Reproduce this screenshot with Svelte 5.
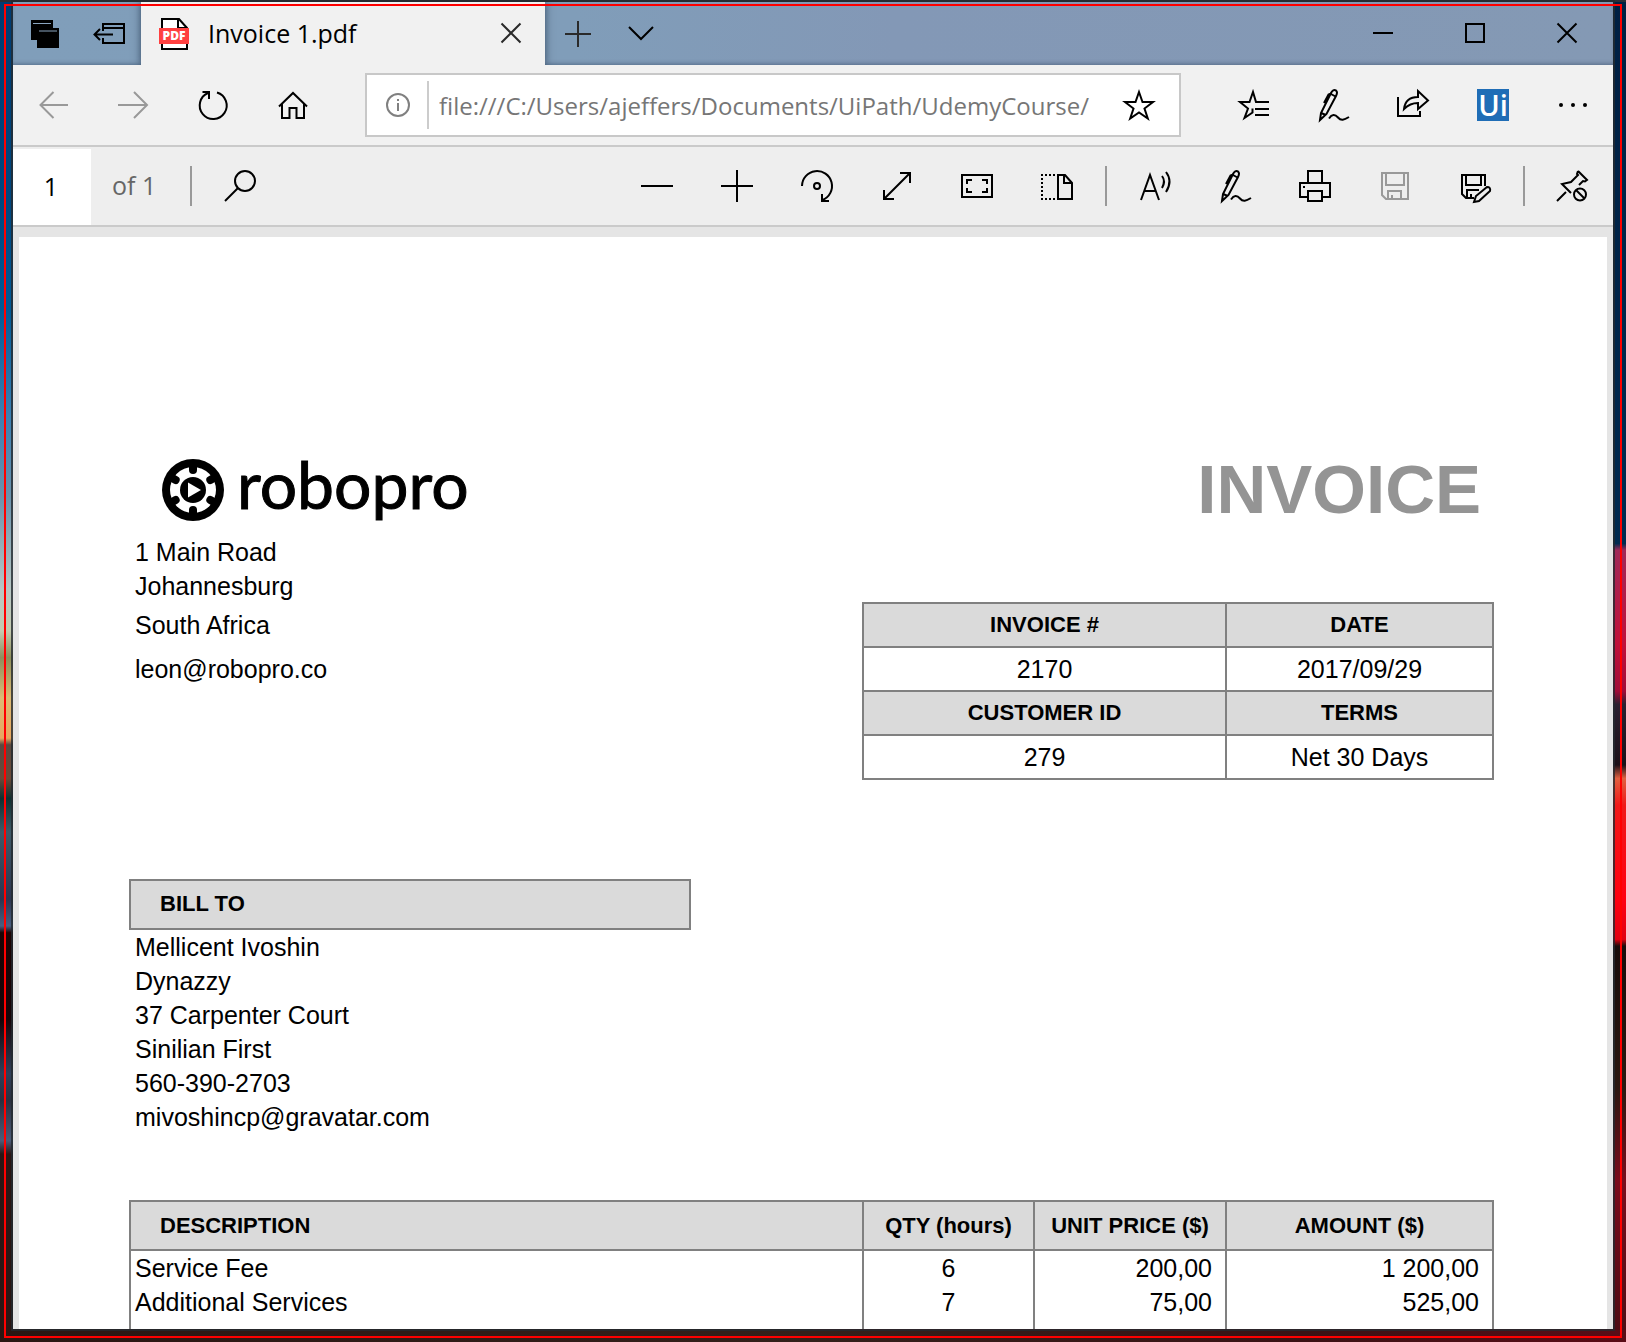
<script lang="ts">
  let address = $state('file:///C:/Users/ajeffers/Documents/UiPath/UdemyCourse/');
  let pageNumber = $state('1');

  const sender = ['1 Main Road', 'Johannesburg'];
  const senderContact = ['South Africa', 'leon@robopro.co'];
  const customer = [
    'Mellicent Ivoshin',
    'Dynazzy',
    '37 Carpenter Court',
    'Sinilian First',
    '560-390-2703',
    'mivoshincp@gravatar.com'
  ];
  const items = [
    { name: 'Service Fee', qty: '6', price: '200,00', amount: '1 200,00' },
    { name: 'Additional Services', qty: '7', price: '75,00', amount: '525,00' }
  ];
  const teeth = [0, 60, 120, 180, 240, 300];
</script>

{#snippet pen()}
  <svg class="icon" viewBox="0 0 32 32">
    <path d="M3 31 L4 24 L14 4 Q16 0 19 1.500 Q21 3 19 7 L9.500 25 Z M14 5 L18.500 7.500 M4 24 L9 26 M7 14 L11.500 5.500 L14 4.500" />
    <path d="M12 29.500 C15 25 18 25 21 28.500 C24 32 27 31 32 28" />
  </svg>
{/snippet}

<div class="desktop">
  <div class="window">
    <header class="titlebar">
      <button class="tool tab-tool" aria-label="Tabs set aside">
        <svg class="icon" viewBox="0 0 32 32">
          <path class="solid" d="M2 3h22v8h6v20H8v-8H2z" />
          <path class="pale" d="M4 6.500h18M10 14h18" />
        </svg>
      </button>
      <button class="tool tab-tool" aria-label="Set these tabs aside">
        <svg class="icon" viewBox="0 0 32 32">
          <path d="M10 14V7h21v19H10v-5M10 11h21M1.500 17.500H20M7 12L1.500 17.500L7 23" />
        </svg>
      </button>
      <div class="tab">
        <svg class="icon" viewBox="0 0 32 32">
          <path class="sheet" d="M4 1h17l8 9v21H4z" />
          <path d="M20 1v9h9" />
          <rect class="badge" x="1" y="10" width="30" height="16" />
          <text class="badge-text" x="16" y="22">PDF</text>
        </svg>
        <span class="tab-title">Invoice 1.pdf</span>
        <button class="tool tab-close" aria-label="Close tab">
          <svg class="icon dim" viewBox="0 0 32 32"><path d="M6.500 6.500l19 19M25.500 6.500l-19 19" /></svg>
        </button>
      </div>
      <button class="tool tab-tool" aria-label="New tab">
        <svg class="icon dim" viewBox="0 0 32 32"><path d="M4 17h26M17 4v26" /></svg>
      </button>
      <button class="tool tab-tool" aria-label="Show tab previews">
        <svg class="icon" viewBox="0 0 32 32"><path d="M4 10l12 12l12-12" /></svg>
      </button>
      <div class="spacer"></div>
      <button class="tool win-tool" aria-label="Minimize">
        <svg class="icon" viewBox="0 0 32 32"><path d="M6 16h20" /></svg>
      </button>
      <button class="tool win-tool" aria-label="Maximize">
        <svg class="icon" viewBox="0 0 32 32"><path d="M7 7h18v18H7z" /></svg>
      </button>
      <button class="tool win-tool" aria-label="Close window">
        <svg class="icon" viewBox="0 0 32 32"><path d="M6.500 6.500l19 19M25.500 6.500l-19 19" /></svg>
      </button>
    </header>

    <nav class="navbar">
      <button class="tool" aria-label="Back" disabled>
        <svg class="icon" viewBox="0 0 32 32"><path d="M31 16H4M16.500 3L3.500 16l13 13" /></svg>
      </button>
      <button class="tool" aria-label="Forward" disabled>
        <svg class="icon" viewBox="0 0 32 32"><path d="M1 16h28M17 3l13 13l-13 13" /></svg>
      </button>
      <button class="tool" aria-label="Refresh">
        <svg class="icon" viewBox="0 0 32 32"><path d="M20 3.500A13.500 13.500 0 1 1 11 4M5.500 3H12v7" /></svg>
      </button>
      <button class="tool" aria-label="Home">
        <svg class="icon" viewBox="0 0 32 32">
          <path d="M2 17.500L16 4l14 13.500M5 15v14h7.500V19h7v10H27V15" />
        </svg>
      </button>
      <div class="address">
        <button class="tool info" aria-label="Site information">
          <svg class="icon" viewBox="0 0 32 32">
            <circle cx="17" cy="16" r="11" /><path d="M17 14v8M17 10v2" />
          </svg>
        </button>
        <input class="url" type="text" aria-label="Address" bind:value={address} />
        <button class="tool favorite" aria-label="Add to favorites">
          <svg class="icon" viewBox="0 0 32 32">
            <path d="M16 3l3.500 10H30l-8.500 6.500l3.300 10L16 23.500l-8.800 6l3.300-10L2 13h10.500z" />
          </svg>
        </button>
      </div>
      <button class="tool" aria-label="Favorites and history">
        <svg class="icon" viewBox="0 0 32 32">
          <path d="M32 13H19L16 3L12.500 13H3l8 6.500L7.500 29l8-5.500v-4M18 20h14M18 26h14" />
        </svg>
      </button>
      <button class="tool" aria-label="Add notes">{@render pen()}</button>
      <button class="tool" aria-label="Share">
        <svg class="icon" viewBox="0 0 32 32">
          <path d="M1 8v19h22v-5" />
          <path d="M7 20c1-8 6-12 14-12V2l10 9.500L21 20v-6c-6 0-10 2-14 6z" />
        </svg>
      </button>
      <button class="tool" aria-label="UiPath extension"><span class="uipath">Ui</span></button>
      <button class="tool" aria-label="Settings and more">
        <svg class="icon" viewBox="0 0 32 32">
          <circle class="solid" cx="4" cy="16" r="2" /><circle class="solid" cx="16" cy="16" r="2" />
          <circle class="solid" cx="28" cy="16" r="2" />
        </svg>
      </button>
    </nav>

    <div class="pdfbar">
      <input class="page-number" type="text" aria-label="Page number" bind:value={pageNumber} />
      <span class="page-count">of 1</span>
      <span class="divider"></span>
      <button class="tool find" aria-label="Find">
        <svg class="icon" viewBox="0 0 32 32"><circle cx="21" cy="11" r="10" /><path d="M14 18L1 31" /></svg>
      </button>
      <div class="spacer"></div>
      <button class="tool" aria-label="Zoom out">
        <svg class="icon" viewBox="0 0 32 32"><path d="M0 16h32" /></svg>
      </button>
      <button class="tool" aria-label="Zoom in">
        <svg class="icon" viewBox="0 0 32 32"><path d="M0 16h32M16 0v32" /></svg>
      </button>
      <button class="tool" aria-label="Rotate">
        <svg class="icon" viewBox="0 0 32 32">
          <path d="M1 16A15 15 0 1 1 21.500 30M21 24v7h7" /><circle cx="16" cy="16" r="3" />
        </svg>
      </button>
      <button class="tool" aria-label="Full screen">
        <svg class="icon" viewBox="0 0 32 32"><path d="M3 29L29 3M19 3h10v10M3 20v9h10" /></svg>
      </button>
      <button class="tool" aria-label="Fit to page">
        <svg class="icon" viewBox="0 0 32 32">
          <path d="M1 5h30v22H1zM6 14v-4h5M21 10h5v4M26 18v4h-5M11 22H6v-4" />
        </svg>
      </button>
      <button class="tool" aria-label="Page layout">
        <svg class="icon" viewBox="0 0 32 32">
          <path class="dots" d="M14 5H1v24h15" />
          <path d="M17 5h7l7 8v16H17zM23 5v8h8" />
        </svg>
      </button>
      <span class="divider"></span>
      <button class="tool" aria-label="Read aloud">
        <svg class="icon" viewBox="0 0 32 32">
          <path d="M2 30L11 5l9 25M5 21h12M23 6q4 5 0 12M27 2q7 9 0 20" />
        </svg>
      </button>
      <button class="tool" aria-label="Draw">{@render pen()}</button>
      <button class="tool" aria-label="Print">
        <svg class="icon" viewBox="0 0 32 32">
          <path d="M9 13V1h14v12M9 27H1V13h30v14h-8M9 21h14v10H9z" />
          <rect class="solid" x="4" y="16" width="2" height="2" />
        </svg>
      </button>
      <button class="tool" aria-label="Save" disabled>
        <svg class="icon" viewBox="0 0 32 32">
          <path d="M3 3h26v26H7l-4-4zM7 3v12h18V3M9 29v-8h13v8M13 29v-4" />
        </svg>
      </button>
      <button class="tool" aria-label="Save as">
        <svg class="icon" viewBox="0 0 32 32">
          <path d="M15 28H7l-4-4V5h23v11M7 5v10h15V5M8 28v-8h12M12 28v-4" />
          <path d="M15 32l2-6L28 17q4 0 3 4L20 31z" />
        </svg>
      </button>
      <span class="divider"></span>
      <button class="tool" aria-label="Unpin toolbar">
        <svg class="icon" viewBox="0 0 32 32">
          <path d="M0 31l9-9M21 1l9 9l-2 1.500l-2-.5l-4 4M21 1l-1 3l1 1l-7 7l-9 2l9 9" />
          <circle cx="23" cy="24.500" r="6" /><path d="M19 20l8.500 8.500" />
        </svg>
      </button>
    </div>

    <main class="viewer">
      <article class="page">
        <div class="masthead">
          <div class="logo">
            <svg class="gear" viewBox="0 0 64 64">
              <circle cx="32" cy="32" r="31" />
              <circle class="ring" cx="32" cy="32" r="23" />
              {#each teeth as angle}
                <path d="M28 6v6a4 4 0 0 0 8 0V6z" transform="rotate({angle} 32 32)" />
              {/each}
              <circle cx="32" cy="32" r="13" />
              <path class="ring" d="M27 24.500v15L40 32z" />
            </svg>
            <span class="wordmark">robopro</span>
          </div>
          <h1>INVOICE</h1>
        </div>

        <div class="details">
          <address>
            {#each sender as line}<div>{line}</div>{/each}
            {#each senderContact as line}<div class="spaced">{line}</div>{/each}
          </address>
          <table class="summary">
            <tbody>
              <tr><th scope="col">INVOICE #</th><th class="narrow" scope="col">DATE</th></tr>
              <tr><td>2170</td><td>2017/09/29</td></tr>
              <tr><th scope="col">CUSTOMER ID</th><th scope="col">TERMS</th></tr>
              <tr><td>279</td><td>Net 30 Days</td></tr>
            </tbody>
          </table>
        </div>

        <section class="bill">
          <h2>BILL TO</h2>
          {#each customer as line}<div class="bill-line">{line}</div>{/each}
        </section>

        <table class="items">
          <thead>
            <tr>
              <th class="description" scope="col">DESCRIPTION</th>
              <th class="qty" scope="col">QTY (hours)</th>
              <th class="price" scope="col">UNIT PRICE ($)</th>
              <th class="amount" scope="col">AMOUNT ($)</th>
            </tr>
          </thead>
          <tbody>
            {#each items as item}
              <tr>
                <td>{item.name}</td>
                <td class="center">{item.qty}</td>
                <td class="number">{item.price}</td>
                <td class="number">{item.amount}</td>
              </tr>
            {/each}
            <tr class="blank"><td></td><td></td><td></td><td></td></tr>
          </tbody>
        </table>
      </article>
    </main>
  </div>
  <div class="outline"></div>
</div>

<style>
  :global(body) {
    margin: 0;
    overflow: hidden;
  }
  .desktop {
    position: relative;
    box-sizing: border-box;
    height: 100vh;
    padding: 2px 13px 13px;
    background:
      linear-gradient(90deg, #2a1612, #33201a 50%, #3a1214 80%, #5a0c16) bottom / 100% 12px no-repeat,
      linear-gradient(#2b2e36, #2b2e36) top / 100% 2px no-repeat,
      linear-gradient(
          #003c72, #00477f 15%, #005a96 23%, #3c80b2 31%, #6b92ac 37%, #b8c8c4 44%, #c4cbb0 47%, #8d8f5c 49%,
          #dcbb74 52%, #e8a860 55%, #5a4a40 55.500%, #6b4a38 58%, #0e3030 59.500%, #3f5a68 62%, #2c3550 67%,
          #4a5f80 69%, #1c0404 69.500%, #150408 76%, #30405a 80%, #2a3040 82%, #4c5c78 85%, #2a1614 86%, #2a1614
        )
        left / 50% 100% no-repeat,
      linear-gradient(
          #001f42, #002a50 40.500%, #a02858 41%, #c0103a 48%, #a00c38 51.500%, #2a2030 52.500%, #1a1018 57%,
          #e06040 58%, #f01818 60%, #ff0010 67%, #e00010 70%, #180c0a 70.500%, #2a1810 81%, #7a0c1c 88%, #4a0c14
        )
        right / 50% 100% no-repeat;
    font-family: 'Open Sans', 'Noto Sans', sans-serif;
  }
  .outline {
    position: absolute;
    inset: 4px;
    border: 2px solid #ff0000;
    pointer-events: none;
  }
  .window {
    display: flex;
    flex-direction: column;
    height: 100%;
    overflow: hidden;
    background: #f1f1f1;
    box-shadow: 0 0 0 2px rgb(36 42 48 / 80%);
  }
  .spacer {
    flex: 1;
  }

  .icon {
    display: block;
    flex: none;
    width: 32px;
    height: 32px;
    overflow: visible;
    fill: none;
    stroke: currentColor;
    stroke-width: 2;
  }
  .icon .solid {
    fill: currentColor;
    stroke: none;
  }
  .icon .pale {
    stroke: #8aa5bf;
    stroke-width: 1;
  }
  .icon .dots {
    stroke-dasharray: 2 2;
  }
  .dim {
    color: #2a2a2a;
  }
  .tool {
    display: flex;
    flex: none;
    align-items: center;
    justify-content: center;
    width: 80px;
    padding: 0;
    border: 0;
    background: none;
    color: #000;
  }
  .tool:disabled {
    color: #999;
  }

  .titlebar {
    display: flex;
    flex: none;
    height: 63px;
    overflow: hidden;
    background: linear-gradient(90deg, #809eba, #809db9 35%, #8398b6 55%, #8499b4);
    box-shadow: inset 0 -3px 4px -2px rgb(40 60 90 / 50%);
  }
  .tab-tool {
    width: 64px;
  }
  .win-tool {
    width: 92px;
  }
  .titlebar .tool {
    padding-bottom: 2px;
  }
  .tab {
    display: flex;
    align-items: center;
    width: 404px;
    box-sizing: border-box;
    padding-left: 17px;
    background: #f1f1f1;
    box-shadow: 0 0 8px rgb(20 35 60 / 70%);
  }
  .sheet {
    fill: #fff;
  }
  .badge {
    fill: #ff4040;
    stroke: none;
  }
  .badge-text {
    fill: #fff;
    stroke: none;
    font-size: 12px;
    font-weight: 800;
    text-anchor: middle;
  }
  .tab-title {
    flex: 1;
    padding: 0 0 2px 18px;
    font-size: 25px;
    line-height: 32px;
  }
  .tab-close {
    width: 68px;
  }

  .navbar {
    display: flex;
    flex: none;
    height: 80px;
    border-bottom: 2px solid #cacaca;
  }
  .address {
    display: flex;
    flex: 1;
    align-items: center;
    box-sizing: border-box;
    min-width: 0;
    margin: 8px 32px;
    border: 2px solid #c8c8c8;
    background: #fff;
  }
  .info {
    width: 62px;
    height: 48px;
    border-right: 2px solid #ccc;
    color: #808080;
  }
  .url {
    flex: 1;
    min-width: 0;
    height: 48px;
    margin-left: 10px;
    padding: 0;
    border: 0;
    background: none;
    color: #767676;
    font-family: inherit;
    font-size: 24px;
  }
  .favorite {
    width: 80px;
  }
  .uipath {
    width: 32px;
    background: #1f6db6;
    color: #fff;
    font-family: 'Open Sans', sans-serif;
    font-size: 29px;
    font-weight: 600;
    line-height: 32px;
  }

  .pdfbar {
    display: flex;
    flex: none;
    align-items: center;
    height: 78px;
    border-bottom: 2px solid #cacaca;
    background: #eee;
  }
  .pdfbar .tool {
    height: 78px;
  }
  .page-number {
    align-self: flex-end;
    box-sizing: border-box;
    width: 78px;
    height: 76px;
    padding: 0 2px 2px 0;
    border: 0;
    background: #fff;
    font-family: inherit;
    font-size: 25px;
    text-align: center;
  }
  .page-count {
    width: 70px;
    padding: 0 0 2px 21px;
    color: #666;
    font-size: 25px;
  }
  .divider {
    width: 2px;
    height: 40px;
    margin: 0 8px;
    background: #999;
  }

  .viewer {
    flex: 1;
    min-height: 0;
    overflow: hidden;
    padding: 10px 6px 0;
    background: #e5e5e5;
  }
  .page {
    padding: 221px 113px 0 110px;
    background: #fff;
    color: #000;
    font-family: 'Liberation Sans', Arial, sans-serif;
    font-size: 25px;
    line-height: 34px;
  }
  .masthead {
    display: flex;
    align-items: center;
    justify-content: space-between;
    height: 64px;
    padding: 0 13px 0 32px;
  }
  .logo {
    display: flex;
    align-items: center;
    gap: 12px;
  }
  .gear {
    width: 64px;
    height: 64px;
  }
  .ring {
    fill: #fff;
  }
  .wordmark {
    padding-bottom: 12px;
    font-family: Lato, sans-serif;
    font-size: 66px;
    font-weight: 400;
    line-height: 60px;
    -webkit-text-stroke: 1px #000;
  }
  h1 {
    margin: 0;
    color: #949494;
    font-size: 69px;
    line-height: 64px;
  }
  .details {
    display: flex;
    align-items: flex-start;
    justify-content: space-between;
  }
  address {
    margin-top: 13px;
    padding-left: 6px;
    font-style: normal;
  }
  .spaced {
    line-height: 44px;
  }
  table {
    border-collapse: collapse;
    table-layout: fixed;
  }
  th {
    background: #dadada;
    font-size: 22px;
  }
  .summary {
    width: 632px;
    margin-top: 80px;
    text-align: center;
  }
  .summary th,
  .summary td {
    height: 42px;
    padding: 0;
    border: 2px solid #808080;
  }
  .narrow,
  .amount {
    width: 265px;
  }
  .bill {
    margin-top: 99px;
  }
  h2 {
    box-sizing: border-box;
    width: 562px;
    margin: 0;
    padding: 6px 28px 7px 29px;
    border: 2px solid #808080;
    background: #dadada;
    font-size: 22px;
  }
  .bill-line {
    padding-left: 6px;
  }
  .items {
    width: 100%;
    margin-top: 66px;
  }
  .items th {
    height: 47px;
    padding: 0;
    border: 2px solid #808080;
  }
  .items .description {
    padding-left: 29px;
    text-align: left;
  }
  .items .qty {
    width: 169px;
  }
  .items .price {
    width: 190px;
  }
  .items td {
    padding: 0 13px 0 4px;
    border: solid #808080;
    border-width: 0 2px;
    line-height: 34px;
  }
  .items .center {
    padding: 0;
    text-align: center;
  }
  .number {
    text-align: right;
  }
  .blank td {
    height: 340px;
  }
</style>
